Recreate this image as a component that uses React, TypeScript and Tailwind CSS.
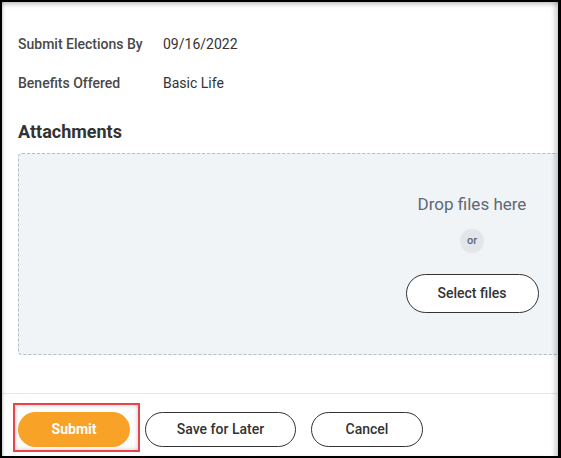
import React from "react";

export default function App() {
  return (
    <div
      className="w-[561px] h-[458px] bg-black pt-[2px] pl-[2px] pr-[3px] pb-[2px]"
      style={{ fontFamily: "Roboto, 'Liberation Sans', sans-serif" }}
    >
      <div className="relative w-full h-full bg-white overflow-hidden">
        <div className="flex flex-col">
          <div className="pl-[16px] pt-[32px] flex flex-col gap-[19px]">
            <div className="flex items-center h-[20px] text-[14px]">
              <span className="w-[145px] font-medium text-[#494949]">Submit Elections By</span>
              <span className="text-[#333333]">09/16/2022</span>
            </div>
            <div className="flex items-center h-[20px] text-[14px]">
              <span className="w-[145px] font-medium text-[#494949]">Benefits Offered</span>
              <span className="text-[#333333]">Basic Life</span>
            </div>
          </div>
          <h2 className="pl-[16px] mt-[27px] h-[24px] leading-[24px] text-[18px] font-bold text-[#333333]">
            Attachments
          </h2>
          <div className="ml-[16px] mt-[9px] w-[580px] h-[202px] rounded-[4px] border border-dashed border-[#b7bcc1] bg-[#f0f4f7] pt-[40px]">
            <div className="ml-[373px] w-[160px] flex flex-col items-center">
              <div className="h-[20px] leading-[20px] text-[17px] text-[#5e6873]">Drop files here</div>
              <div className="mt-[15px] w-[24px] h-[24px] rounded-full bg-[#e3e6e9] flex items-center justify-center text-[11px] font-medium text-[#5e6873]">
                or
              </div>
              <button className="mt-[21px] w-[133px] h-[39px] rounded-full border border-[#333333] bg-white text-[14px] font-medium text-[#333333]">
                Select files
              </button>
            </div>
          </div>
          <div className="mt-[38px] h-px bg-[#e6e6e6]" />
          <div className="pl-[16px] pt-[18px] flex items-center gap-[15px]">
            <div className="relative">
              <button className="w-[112px] h-[35px] rounded-full bg-[#f8a227] text-white text-[14px] font-bold">
                Submit
              </button>
              <span className="absolute left-[-5px] top-[-9px] w-[127px] h-[49px] border-2 border-[#e9434b] shadow-[inset_0_0_4px_rgba(0,0,0,0.25)] pointer-events-none" />
            </div>
            <button className="w-[151px] h-[35px] rounded-full border border-[#333333] bg-white text-[14px] font-medium text-[#333333]">
              Save for Later
            </button>
            <button className="w-[112px] h-[35px] rounded-full border border-[#333333] bg-white text-[14px] font-medium text-[#333333]">
              Cancel
            </button>
          </div>
        </div>
        <div className="pointer-events-none absolute inset-0 shadow-[inset_0_6px_5px_-4px_rgba(0,0,0,0.25),inset_3px_0_3px_-2px_rgba(0,0,0,0.2),inset_-6px_0_5px_-3px_rgba(0,0,0,0.2)]" />
      </div>
    </div>
  );
}
